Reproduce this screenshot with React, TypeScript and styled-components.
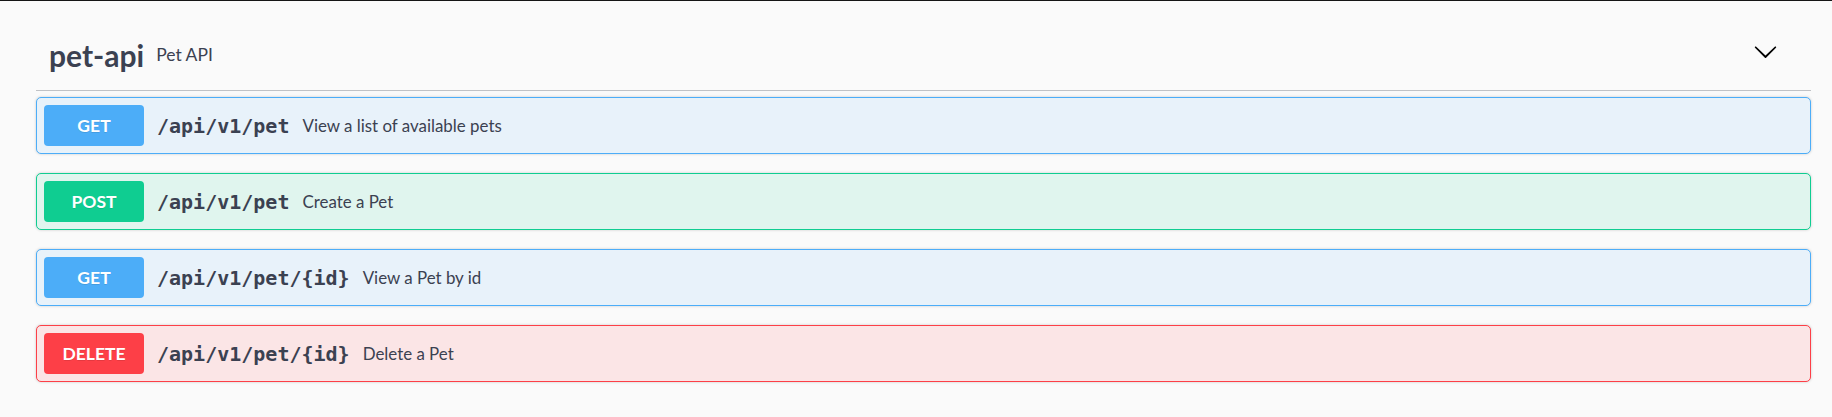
import React from "react";
import styled, { createGlobalStyle } from "styled-components";

const GlobalStyle = createGlobalStyle`
  html, body {
    margin: 0;
    padding: 0;
    background: #fafafa;
  }
  body {
    font-family: "Lato", "Open Sans", sans-serif;
    color: #3b4151;
  }
  * { box-sizing: border-box; }
`;

type Method = "get" | "post" | "delete";

const palette: Record<Method, { main: string; bg: string }> = {
  get: { main: "#4cadf8", bg: "#e8f2fa" },
  post: { main: "#0fcd91", bg: "#e0f5ee" },
  delete: { main: "#fd3f47", bg: "#fbe5e6" },
};

const Page = styled.div`
  border-top: 1px solid #151515;
  min-height: 417px;
  background: #fafafa;
`;

const Wrapper = styled.section`
  padding: 0 21px 0 36px;
`;

const TagHeader = styled.div`
  height: 90px;
  padding: 12px 0 0 13px;
  display: flex;
  align-items: center;
  border-bottom: 1px solid rgba(59, 65, 81, 0.3);
  margin-bottom: 6px;
`;

const TagTitle = styled.h4`
  margin: 0;
  padding-top: 6px;
  flex: 1;
  display: flex;
  align-items: center;
  font-family: "Lato", sans-serif;
  font-size: 30px;
  font-weight: 700;
  color: #3b4151;
`;

const TagSmall = styled.small`
  margin-left: 12px;
  font-size: 17.5px;
  font-weight: 400;
  color: #3b4151;
`;

const ToggleButton = styled.button`
  border: none;
  background: transparent;
  padding: 0;
  margin-right: 33px;
  width: 25px;
  height: 25px;
  display: flex;
  align-items: center;
  justify-content: center;
  cursor: pointer;
`;

const OpBlock = styled.div<{ $method: Method }>`
  margin-bottom: 19px;
  border: 1px solid ${(p) => palette[p.$method].main};
  background: ${(p) => palette[p.$method].bg};
  border-radius: 5px;
  box-shadow: 0 0 3px rgba(0, 0, 0, 0.19);
`;

const Summary = styled.div`
  display: flex;
  align-items: center;
  padding: 7px;
  cursor: pointer;
`;

const MethodBadge = styled.span<{ $method: Method }>`
  width: 100px;
  height: 41px;
  flex-shrink: 0;
  display: flex;
  align-items: center;
  justify-content: center;
  border-radius: 4px;
  background: ${(p) => palette[p.$method].main};
  color: #fff;
  font-family: "Lato", sans-serif;
  font-weight: 700;
  font-size: 17.5px;
  text-shadow: 0 1px 0 rgba(0, 0, 0, 0.1);
`;

const Path = styled.span`
  margin-left: 13px;
  font-family: "DejaVu Sans Mono", "Liberation Mono", monospace;
  font-weight: 700;
  font-size: 20px;
  color: #3b4151;
`;

const Description = styled.span`
  margin-left: 13px;
  font-family: "Lato", sans-serif;
  font-size: 16.9px;
  color: #3b4151;
`;

const Chevron = () => (
  <svg width="25" height="25" viewBox="0 0 20 20" aria-hidden="true">
    <path
      fill="#000"
      d="M17.418 6.109c.272-.268.709-.268.979 0s.271.701 0 .969l-7.908 7.83c-.27.268-.707.268-.979 0l-7.908-7.83c-.27-.268-.27-.701 0-.969.271-.268.709-.268.979 0L10 13.25l7.418-7.141z"
    />
  </svg>
);

const ops: { method: Method; path: string; desc: string }[] = [
  { method: "get", path: "/api/v1/pet", desc: "View a list of available pets" },
  { method: "post", path: "/api/v1/pet", desc: "Create a Pet" },
  { method: "get", path: "/api/v1/pet/{id}", desc: "View a Pet by id" },
  { method: "delete", path: "/api/v1/pet/{id}", desc: "Delete a Pet" },
];

export default function App() {
  return (
    <Page>
      <GlobalStyle />
      <Wrapper>
        <TagHeader>
          <TagTitle>
            pet-api
            <TagSmall>Pet API</TagSmall>
          </TagTitle>
          <ToggleButton aria-label="Collapse operation">
            <Chevron />
          </ToggleButton>
        </TagHeader>
        {ops.map((op, i) => (
          <OpBlock key={i} $method={op.method}>
            <Summary>
              <MethodBadge $method={op.method}>{op.method.toUpperCase()}</MethodBadge>
              <Path>{op.path}</Path>
              <Description>{op.desc}</Description>
            </Summary>
          </OpBlock>
        ))}
      </Wrapper>
    </Page>
  );
}
